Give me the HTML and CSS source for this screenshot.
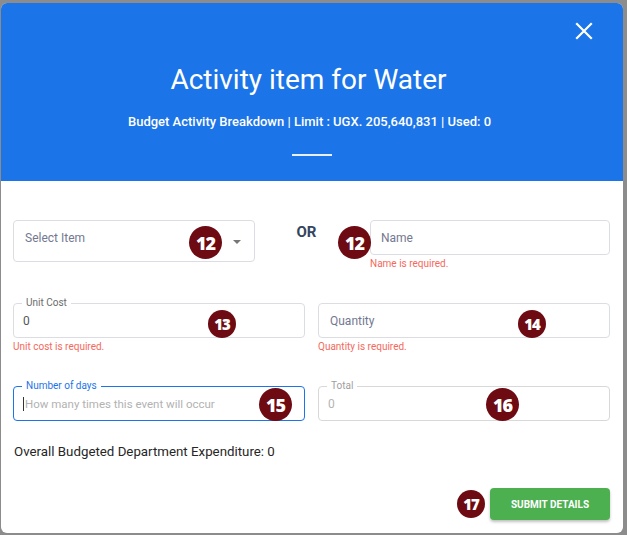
FILE: index.html
```html
<!DOCTYPE html>
<html>
<head>
<meta charset="utf-8">
<link rel="stylesheet" href="styles.css">
</head>
<body>
<div class="modal">
  <header class="modal-head">
    <button class="close" aria-label="Close">
      <svg width="18" height="18" viewBox="0 0 18 18"><path d="M2 2 L16 16 M16 2 L2 16" stroke="#fff" stroke-width="2.2" stroke-linecap="square"/></svg>
    </button>
    <h1 class="title">Activity item for Water</h1>
    <p class="subtitle">Budget Activity Breakdown | Limit : UGX. 205,640,831 | Used: 0</p>
    <div class="rule"></div>
  </header>
  <div class="modal-body">
    <div class="row-first">
      <div class="field select-field">
        <span class="ph-text">Select Item</span>
        <span class="caret"></span>
        <span class="badge b-lg badge-sel">12</span>
      </div>
      <div class="or">OR</div>
      <div class="name-col">
        <div class="field name-field">
          <span class="ph-text">Name</span>
          <span class="badge b-lg badge-name">12</span>
        </div>
        <div class="error">Name is required.</div>
      </div>
    </div>
    <div class="grid">
      <div class="cell">
        <div class="field out">
          <span class="legend">Unit Cost</span>
          <span class="value">0</span>
          <span class="badge b-md badge-13">13</span>
        </div>
        <div class="error">Unit cost is required.</div>
      </div>
      <div class="cell">
        <div class="field out">
          <span class="ph-text">Quantity</span>
          <span class="badge b-md badge-14">14</span>
        </div>
        <div class="error">Quantity is required.</div>
      </div>
      <div class="cell">
        <div class="field out focus">
          <span class="legend blue">Number of days</span>
          <span class="caret-line"></span><span class="ph-light">How many times this event will occur</span>
          <span class="badge b-lg badge-15">15</span>
        </div>
      </div>
      <div class="cell">
        <div class="field out disabled">
          <span class="legend muted">Total</span>
          <span class="value light">0</span>
          <span class="badge b-lg badge-16">16</span>
        </div>
      </div>
    </div>
    <p class="overall">Overall Budgeted Department Expenditure: 0</p>
    <div class="actions">
      <span class="badge b-md badge-17">17</span>
      <button class="submit">SUBMIT DETAILS</button>
    </div>
  </div>
</div>
</body>
</html>
```
FILE: styles.css
```css
* { box-sizing: border-box; }
html, body { margin: 0; padding: 0; }
body {
  background: #8c8c8c;
  width: 627px;
  height: 535px;
  overflow: hidden;
  font-family: Roboto, "Liberation Sans", sans-serif;
  padding: 3px 4px 2px 1px;
}
.modal {
  width: 622px;
  height: 530px;
  background: #fff;
  border-radius: 6px;
  overflow: hidden;
}
.modal-head {
  position: relative;
  height: 178px;
  background: #1b74e8;
  color: #fff;
  display: flex;
  flex-direction: column;
  align-items: center;
  padding-top: 60px;
}
.close {
  position: absolute;
  right: 30px;
  top: 19px;
  width: 18px;
  height: 18px;
  padding: 0;
  border: 0;
  background: none;
}
.close svg { display: block; }
.title {
  margin: 0 7px 0 0;
  font-size: 28px;
  line-height: 34px;
  font-weight: 400;
}
.subtitle {
  margin: 17px 5px 0 0;
  font-size: 13px;
  line-height: 16px;
  font-weight: 500;
}
.rule {
  margin-top: 24px;
  width: 40px;
  height: 2px;
  background: #e9f0fb;
}
.modal-body {
  padding: 39px 13px 0 12px;
}
.row-first {
  display: flex;
  align-items: flex-start;
}
.field {
  position: relative;
  border: 1px solid #dcdde3;
  border-radius: 4px;
  display: flex;
  align-items: center;
}
.select-field {
  width: 242px;
  height: 42px;
  padding: 0 11px;
  align-items: flex-start;
  padding-top: 10px;
}
.ph-text {
  font-size: 12px;
  color: #737891;
  line-height: 14px;
}
.caret {
  position: absolute;
  right: 13px;
  top: 19px;
  width: 0;
  height: 0;
  border-left: 4px solid transparent;
  border-right: 4px solid transparent;
  border-top: 4px solid #777;
}
.or {
  width: 115px;
  text-align: center;
  padding-top: 3px;
  padding-right: 12px;
  font-size: 15px;
  font-weight: 700;
  color: #344560;
}
.name-col { width: 240px; }
.name-field {
  height: 35px;
  padding: 0 10px;
}
.error {
  font-size: 10px;
  color: #f4695c;
  line-height: 12px;
  margin-top: 3px;
}
.grid {
  display: grid;
  grid-template-columns: 292px 292px;
  column-gap: 13px;
  margin-top: 33px;
  row-gap: 0;
}
.cell { height: 83px; }
.out {
  height: 35px;
  padding: 0 9px;
}
.out .ph-text { padding-left: 2px; }
.legend {
  position: absolute;
  left: 8px;
  top: -7px;
  background: #fff;
  padding: 0 4px;
  font-size: 10px;
  line-height: 12px;
  color: #6b6b6b;
}
.legend.blue { color: #1b74e8; }
.legend.muted { color: #a0a0a0; }
.value {
  font-size: 12px;
  color: #555;
}
.value.light { color: #b4b4b4; }
.focus { border-color: #1b74e8; }
.disabled { border-color: #d8d8d8; }
.caret-line {
  width: 1px;
  height: 14px;
  background: #333;
  margin-right: 1px;
}
.ph-light {
  font-size: 11.5px;
  color: #b2b2b2;
}
.badge {
  position: absolute;
  border-radius: 50%;
  background: #6d0a12;
  color: #fff;
  font-family: "Open Sans", Roboto, sans-serif;
  font-weight: 800;
  display: flex;
  align-items: center;
  justify-content: center;
  letter-spacing: -1px;
}
.b-lg { width: 33px; height: 33px; font-size: 18px; }
.b-md { width: 28px; height: 28px; font-size: 15px; }
.badge-sel { left: 175px; top: 5px; }
.badge-name { left: -33px; top: 5px; }
.badge-13 { left: 194px; top: 6px; }
.badge-14 { left: 199px; top: 6px; }
.badge-15 { left: 245px; top: 1px; }
.badge-16 { left: 167px; top: 1px; }
.overall {
  margin: -25px 0 0 1px;
  font-size: 13.3px;
  line-height: 15px;
  color: #262626;
}
.actions {
  display: flex;
  justify-content: flex-end;
  align-items: center;
  gap: 5px;
  margin-top: 29px;
}
.badge-17 { position: static; }
.submit {
  width: 120px;
  height: 32px;
  background: #4caf50;
  color: #fff;
  border: 0;
  border-radius: 4px;
  font-family: Roboto, "Liberation Sans", sans-serif;
  font-size: 10px;
  font-weight: 700;
  box-shadow: 0 2px 3px rgba(0,0,0,0.25);
}
```
